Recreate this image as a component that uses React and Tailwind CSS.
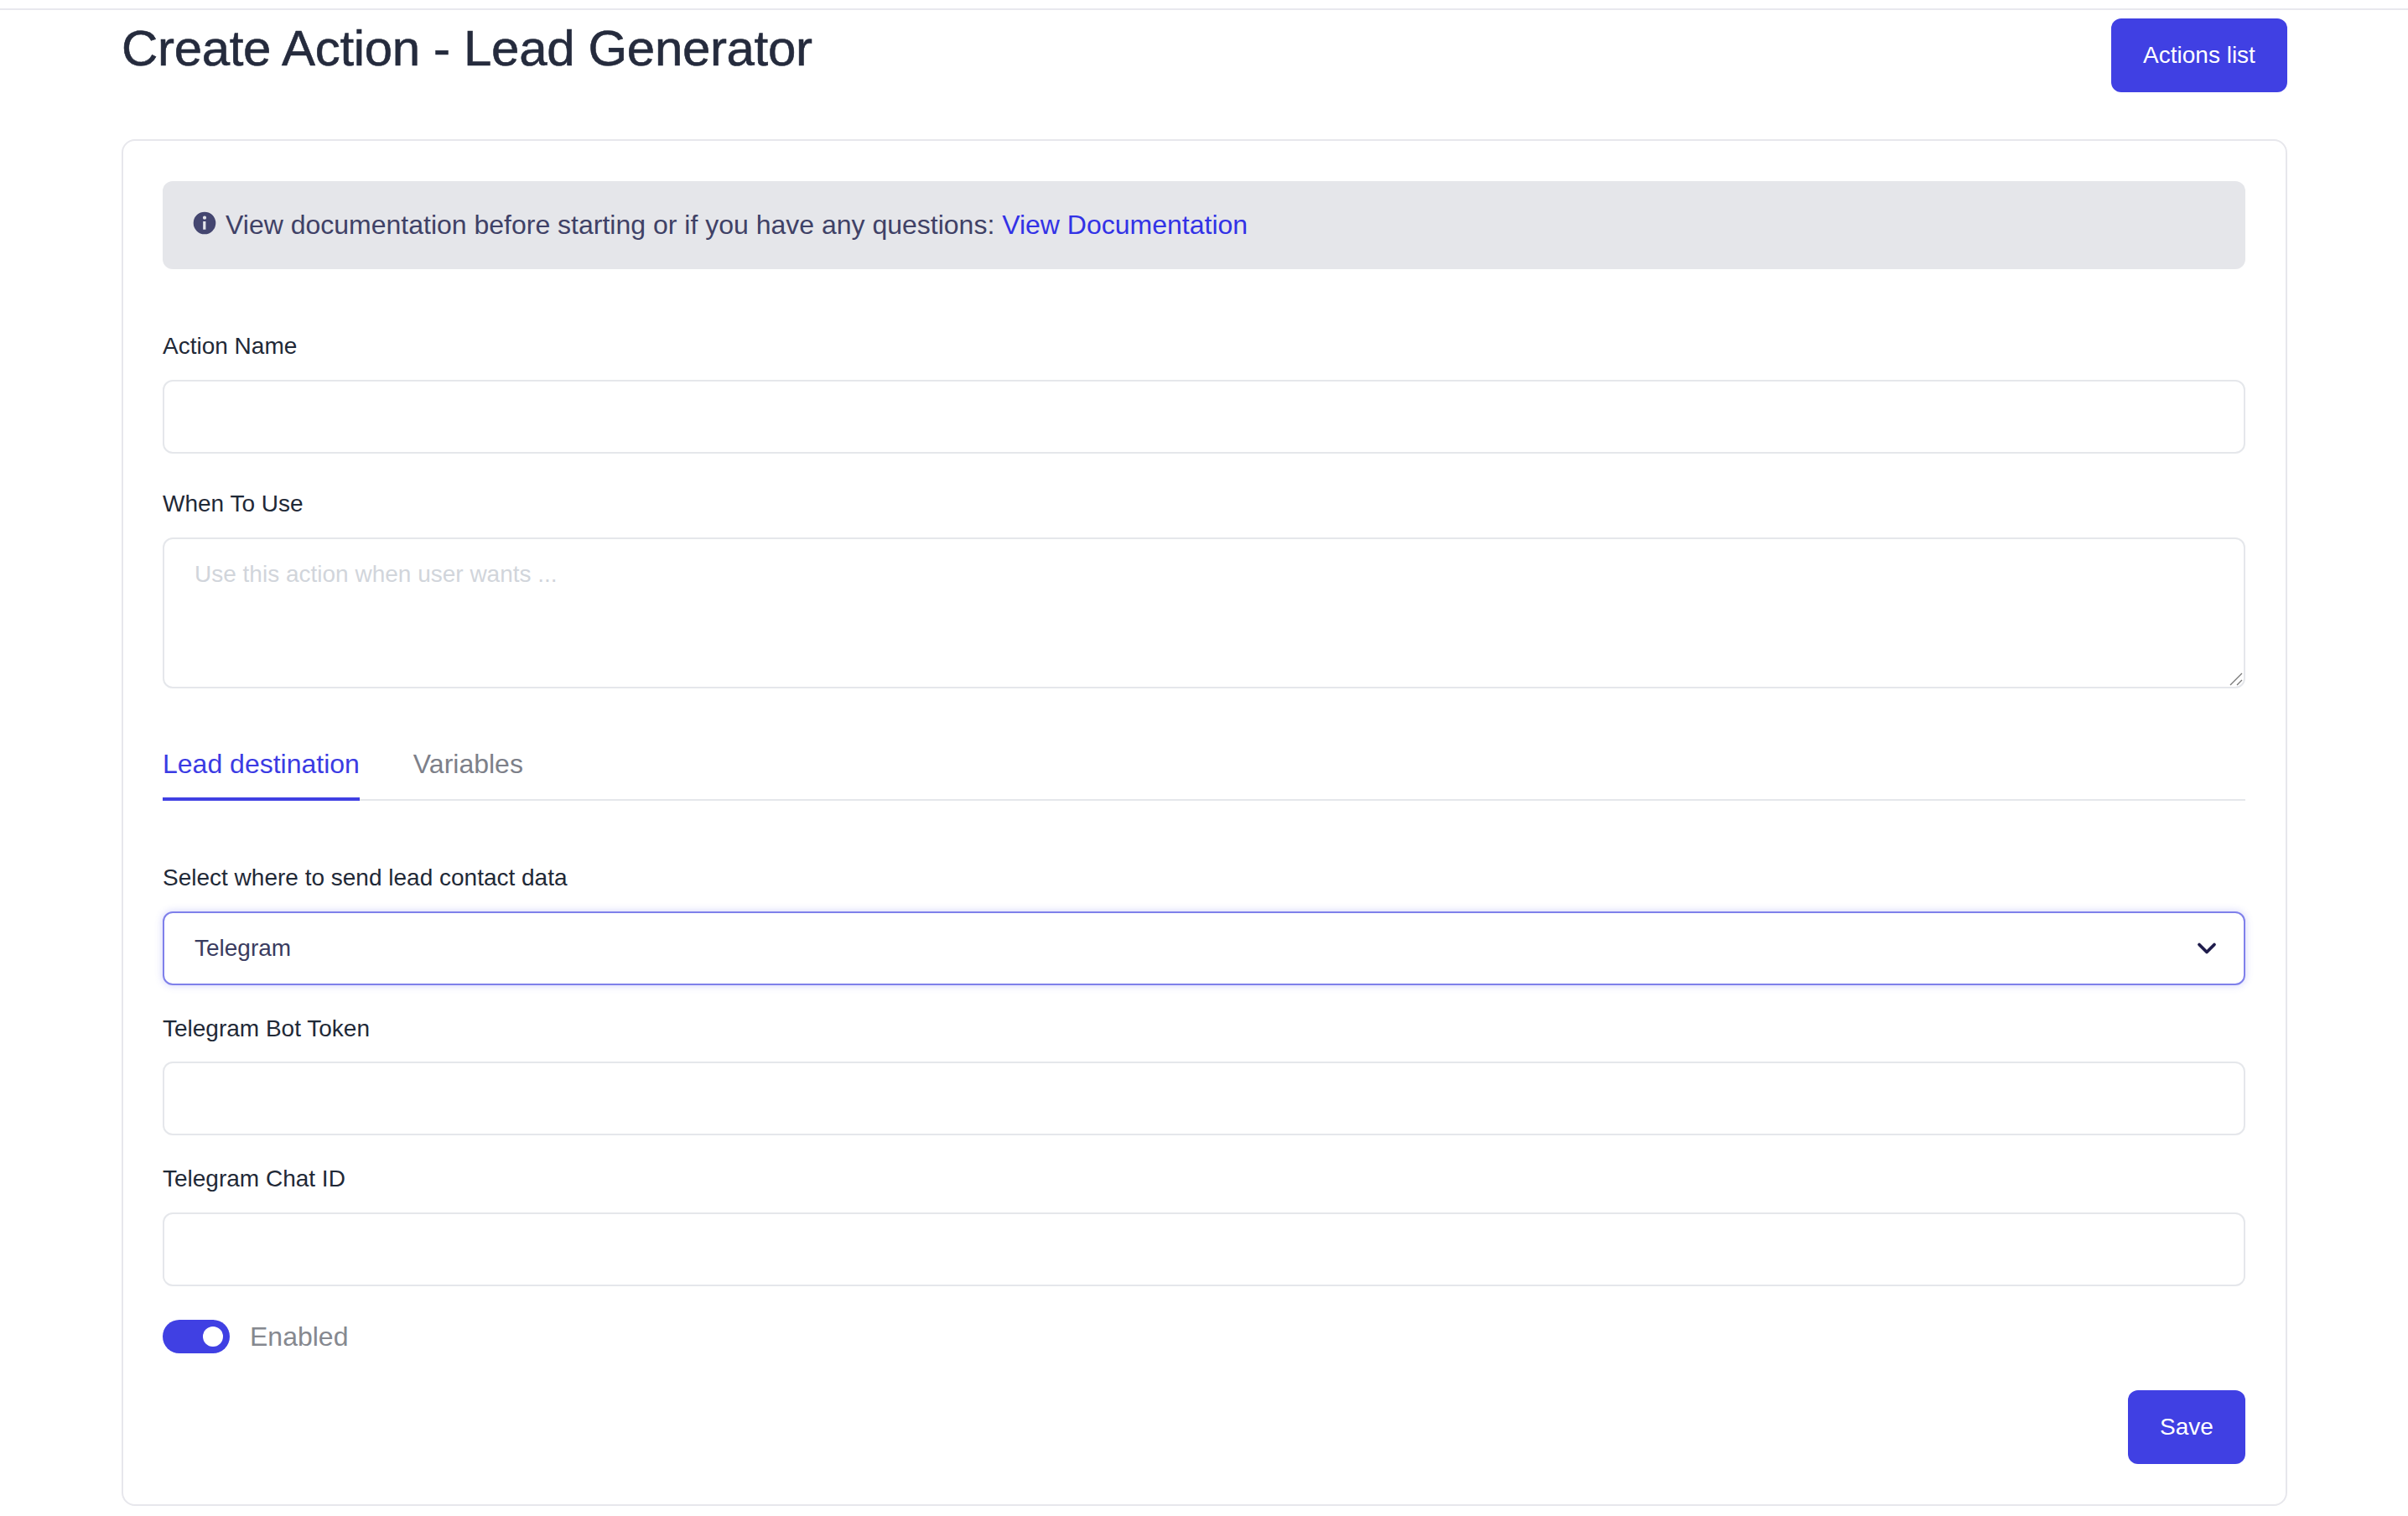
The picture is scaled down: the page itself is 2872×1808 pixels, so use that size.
import React from "react";
import { ChevronDown } from "lucide-react";

const sans = "font-['Liberation_Sans',Arial,sans-serif]";

function Label({ children, className = "" }) {
  return <label className={`block text-[28px] leading-[40px] text-[#1f2937] ${className}`}>{children}</label>;
}

function TextInput({ className = "mt-[20px]" }) {
  return <input type="text" className={`block h-[88px] w-full rounded-[12px] border-2 border-[#e5e7eb] bg-white px-[36px] outline-none ${className}`} />;
}

export default function App() {
  return (
    <div className={`min-h-[1808px] bg-white ${sans}`}>
      <div className="h-[12px] border-b-2 border-[#e8e8ee]"></div>
      <div className="pl-[145px] pr-[144px]">
        <div className="flex items-start justify-between pt-[10px]">
          <h1 className="mt-[6px] text-[60px] leading-[60px] tracking-[-0.34px] text-[#252b3d] [-webkit-text-stroke:0.6px_#252b3d]">Create Action - Lead Generator</h1>
          <button className="h-[88px] w-[210px] rounded-[12px] bg-[#4040e3] text-[28px] text-white">Actions list</button>
        </div>

        <div className="mt-[56px] h-[1630px] rounded-[16px] border-2 border-[#e7e7ec] pl-[47px] pr-[48px] pt-[48px]">
          <div className="flex h-[105px] items-center rounded-[12px] bg-[#e5e6ea] pl-[36px] text-[32px] text-[#3f4166]">
            <svg viewBox="0 0 20 20" className="mr-[11px] mt-[-6px] h-[28px] w-[28px] fill-[#444670]">
              <path fillRule="evenodd" d="M10 .5a9.5 9.5 0 1 0 0 19 9.5 9.5 0 0 0 0-19ZM10 4a1.5 1.5 0 1 1 0 3 1.5 1.5 0 0 1 0-3Zm-1.3 4.6h2.3v7H8.7v-7Z" />
            </svg>
            <span className="pb-[2px]">View documentation before starting or if you have any questions: <a className="text-[#3232e6]">View Documentation</a></span>
          </div>

          <Label className="mt-[72px]">Action Name</Label>
          <TextInput />

          <Label className="mt-[40px]">When To Use</Label>
          <div className="relative mt-[20px]">
            <textarea
              className="block h-[180px] w-full resize-none rounded-[12px] border-2 border-[#e5e7eb] bg-white px-[36px] py-[22px] text-[28px] leading-[40px] outline-none placeholder:text-[#d1d5db]"
              placeholder="Use this action when user wants ..."
            ></textarea>
            <svg viewBox="0 0 16 16" className="absolute bottom-[3px] right-[3px] h-[16px] w-[16px] stroke-[#777777]" strokeWidth="1.3" fill="none">
              <path d="M1 15 15 1M9 15l6-6" />
            </svg>
          </div>

          <div className="mt-[58px] flex gap-[64px] border-b-2 border-[#e5e7eb] text-[32px]">
            <div className="mb-[-2px] border-b-4 border-[#4040e3] pb-[8px] leading-[64px] text-[#3b3be3]">Lead destination</div>
            <div className="leading-[64px] text-[#7d8089]">Variables</div>
          </div>

          <Label className="mt-[72px]">Select where to send lead contact data</Label>
          <div className="relative mt-[20px]">
            <select className="block h-[88px] w-full appearance-none rounded-[12px] border-2 border-[#7f80ea] bg-white px-[36px] text-[28px] text-[#3a3c60] shadow-[0_0_10px_rgba(99,102,241,0.3)] outline-none">
              <option>Telegram</option>
            </select>
            <ChevronDown className="absolute right-[28px] top-[26px] h-[36px] w-[36px] text-[#1e1b4b]" strokeWidth={2.5} />
          </div>

          <Label className="mt-[32px]">Telegram Bot Token</Label>
          <TextInput className="mt-[19px]" />

          <Label className="mt-[32px]">Telegram Chat ID</Label>
          <TextInput />

          <div className="mt-[36px] flex items-center">
            <div className="flex h-[40px] w-[80px] items-center justify-end rounded-full bg-[#4040e3] pr-[8px]">
              <div className="h-[24px] w-[24px] rounded-full bg-white"></div>
            </div>
            <span className="ml-[24px] text-[32px] text-[#85888f]">Enabled</span>
          </div>

          <div className="mt-[40px] flex justify-end">
            <button className="h-[88px] w-[140px] rounded-[12px] bg-[#4040e3] text-[28px] text-white">Save</button>
          </div>
        </div>
      </div>
    </div>
  );
}
